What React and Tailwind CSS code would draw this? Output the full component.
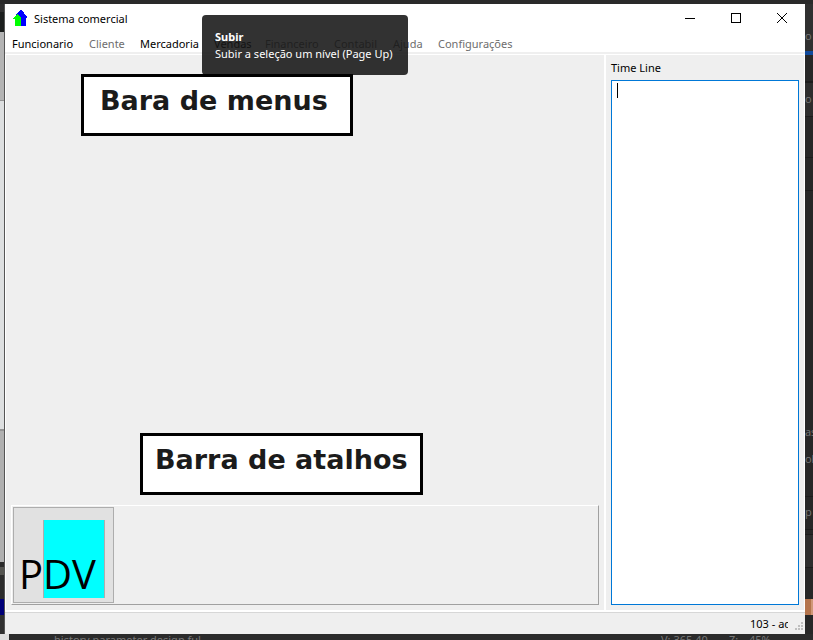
import React from "react";

const menus = [
  { label: "Funcionario", width: "w-[77px]", enabled: true },
  { label: "Cliente", width: "w-[51px]", enabled: false },
  { label: "Mercadoria", width: "w-[74px]", enabled: true },
  { label: "Vendas", width: "w-[51px]", enabled: true },
  { label: "Financeiro", width: "w-[69px]", enabled: false },
  { label: "Contabil", width: "w-[59px]", enabled: false },
  { label: "Ajuda", width: "w-[45px]", enabled: false },
  { label: "Configurações", width: "w-[91px]", enabled: false },
];

function AppIcon() {
  return (
    <svg width="16" height="16" viewBox="0 0 16 16" shapeRendering="crispEdges" aria-hidden="true">
      <path d="M7 0h2v1h1v1h1v2h1v1h1v1h1v2h-1v8H6V8H3V4h1V3h1V2h1V1h1z" fill="#0000ff" />
      <path d="M4 4h1v1h1v1h1v1h1v9H2V9H0V8h1V7h1V6h1V5h1z" fill="#00ff00" />
    </svg>
  );
}

function TitleBar() {
  const control = "flex h-7 w-[46px] items-center justify-center";
  return (
    <header className="flex h-7 shrink-0 items-center bg-white">
      <div className="flex flex-1 items-center gap-[5px] pl-2">
        <AppIcon />
        <h1 className="pt-px leading-4">Sistema comercial</h1>
      </div>
      <button className={control} aria-label="Minimizar">
        <svg width="10" height="11" shapeRendering="crispEdges"><path d="M0 5.5h10" stroke="#000" /></svg>
      </button>
      <button className={control} aria-label="Maximizar">
        <svg width="10" height="10" shapeRendering="crispEdges"><path d="M.5 .5h9v9h-9z" fill="none" stroke="#000" /></svg>
      </button>
      <button className={control} aria-label="Fechar">
        <svg width="10" height="10"><path d="M0 0l10 10M10 0L0 10" stroke="#000" /></svg>
      </button>
    </header>
  );
}

function MenuBar() {
  return (
    <nav className="flex h-[23px] shrink-0 border-b border-white bg-white">
      <div className="flex flex-1 border-b-2 border-[#efefef] pl-[7px]">
        {menus.map((m) => (
          <button
            key={m.label}
            disabled={!m.enabled}
            className={`${m.width} shrink-0 whitespace-nowrap pt-1 text-left leading-4 text-black disabled:text-[#6d6d6d]`}
          >
            {m.label}
          </button>
        ))}
      </div>
    </nav>
  );
}

function Note({ children, className }) {
  return (
    <div
      className={`absolute h-[62px] border-[3px] border-black bg-white pt-2 font-['DejaVu_Sans',sans-serif] text-[27px] font-bold leading-8 whitespace-nowrap text-[#1b1b1b] ${className}`}
    >
      {children}
    </div>
  );
}

function ShortcutBar() {
  return (
    <div className="flex h-[100px] border border-t-white border-r-[#a0a0a0] border-b-[#a0a0a0] border-l-white p-px">
      <button className="relative h-24 w-[101px] border border-[#adadad] bg-[#e1e1e1] font-['Open_Sans',sans-serif] text-[40px] leading-[48px] text-black">
        <span className="absolute bottom-1 left-[29px] h-[78px] w-[62px] border-x border-[#adadad] bg-[#00ffff]" />
        <span className="absolute bottom-1 left-[5px]">PDV</span>
      </button>
    </div>
  );
}

function TimeLine() {
  return (
    <aside className="flex w-[201px] shrink-0 flex-col border-x-2 border-white border-r-[1px] pt-[5px] pr-[5px] pb-[5px] pl-[5px]">
      <label htmlFor="timeline" className="pb-1 leading-4">Time Line</label>
      <div className="relative flex flex-1">
        <textarea id="timeline" className="w-full resize-none border border-[#0078d7] bg-white px-1 outline-none" />
        <span className="absolute top-[3px] left-[6px] h-[15px] w-px bg-black" />
      </div>
    </aside>
  );
}

function StatusBar() {
  return (
    <footer className="flex h-[22px] shrink-0 justify-end border-t border-[#d7d7d7]">
      <span className="w-[38px] overflow-hidden pt-[3px] leading-4 whitespace-nowrap">103 - admin</span>
      <svg className="mt-2 mr-[2px] ml-[7px]" width="8" height="12" shapeRendering="crispEdges" aria-hidden="true">
        <path d="M6 1h2v2H6zM3 4h2v2H3zM6 4h2v2H6zM0 7h2v2H0zM3 7h2v2H3zM6 7h2v2H6z" fill="#bfbfbf" />
      </svg>
    </footer>
  );
}

function LeftBackdrop() {
  return (
    <div className="flex w-[5px] shrink-0 flex-col border-r border-[#555555] bg-[#303030]">
      <div className="h-2 bg-[#303030]" />
      <div className="h-5 bg-[#1b1e1d]" />
      <div className="h-[68px] bg-[#b4b4b4]" />
      <div className="h-[331px] border-t border-b-2 border-[#949494] bg-[#dddfe0]" />
      <div className="h-[131px] bg-[#b0b0b0]" />
      <div className="h-[5px] bg-[#2a2a2a]" />
      <div className="h-2 bg-[#545450]" />
      <div className="h-6 bg-[#2c2c2c]" />
      <div className="h-4 bg-[#000078]" />
    </div>
  );
}

function RightBackdrop() {
  return (
    <div className="flex w-2 shrink-0 flex-col overflow-hidden bg-[#272727] font-['Open_Sans',sans-serif] text-[11px] leading-5 text-[#777777]">
      <div className="h-[47px] bg-[#303030] pt-[22px]">o</div>
      <div className="h-1 bg-[#104a9c]" />
      <div className="h-7 border-b-2 border-[#1c1c1c]" />
      <div className="h-[34px] border-b border-[#1c1c1c] bg-[#2d2d2d] pt-[6px]">o</div>
      <div className="h-[41px] border-b border-[#1c1c1c]" />
      <div className="h-[33px] border-b border-[#1c1c1c]" />
      <div className="h-[305px] pt-[231px]">
        <div className="h-[27px]">as</div>
        <div>ol</div>
      </div>
      <div className="h-[34px] border-y border-[#1c1c1c] pt-[5px]">p</div>
      <div className="h-[5px] border-b border-[#1c1c1c]" />
      <div className="h-[33px] border-b border-[#1c1c1c] bg-[#2d2d2d]" />
      <div className="h-[31px]" />
      <div className="h-4 border-r-2 border-[#d09878] bg-[#b4744c]" />
    </div>
  );
}

export default function App() {
  return (
    <div className="relative flex min-h-screen flex-col overflow-hidden bg-[#2b2b2b] font-['Noto_Sans','Open_Sans',sans-serif] text-[11px] text-black">
      <div className="h-1 shrink-0 bg-[#2a2a2a]" />
      <div className="flex flex-1">
        <LeftBackdrop />
        <main className="flex min-w-0 flex-1 flex-col bg-[#efefef]">
          <TitleBar />
          <MenuBar />
          <div className="flex flex-1 border-b-2 border-l border-white">
            <section className="flex min-w-0 flex-1 flex-col justify-end pr-[5px] pb-[5px] pl-[5px]">
              <ShortcutBar />
            </section>
            <TimeLine />
          </div>
          <StatusBar />
        </main>
        <RightBackdrop />
      </div>
      <div className="flex h-[6px] shrink-0 overflow-hidden text-[11px] leading-3 text-[#777777]">
        <div className="w-[9px] shrink-0 bg-[#dedede]" />
        <span className="flex-1 pl-[45px]">history parameter design ful</span>
        <span className="w-[68px]">V: 365,40</span>
        <span className="w-5">Z:</span>
        <span className="w-16">45%</span>
      </div>

      <div
        role="tooltip"
        className="absolute top-[15px] left-[202px] h-[60px] w-[206px] rounded bg-[#161616]/88 px-[13px] pt-[13px] leading-[17px] whitespace-nowrap text-white"
      >
        <strong className="block">Subir</strong>
        <p>Subir a seleção um nível (Page Up)</p>
      </div>
      <Note className="top-[74px] left-[81px] w-[272px] pl-4">Bara de menus</Note>
      <Note className="top-[433px] left-[140px] w-[283px] pl-3">Barra de atalhos</Note>
    </div>
  );
}
